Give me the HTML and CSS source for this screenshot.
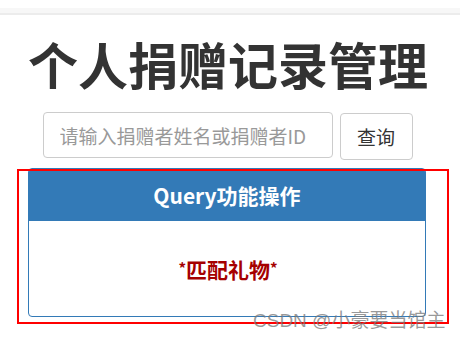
FILE: index.html
```html
<!DOCTYPE html>
<html lang="zh-CN">
<head>
    <meta charset="UTF-8">
    <meta name="viewport" content="width=device-width, initial-scale=1.0">
    <title>个人捐赠记录管理</title>
    <link rel="stylesheet" href="styles.css">
</head>
<body>
    <div class="topbar"></div>

    <div class="container">
        <h1>个人捐赠记录管理</h1>

        <form class="search">
            <input class="search-input" type="text" placeholder="请输入捐赠者姓名或捐赠者ID">
            <button class="search-btn" type="button">查询</button>
        </form>

        <div class="panel">
            <div class="panel-heading">Query功能操作</div>
            <div class="panel-body">
                <span class="gift"><span class="star">*</span>匹配礼物<span class="star">*</span></span>
            </div>
        </div>
    </div>

    <div class="highlight"></div>
    <div class="watermark">CSDN @小豪要当馆主</div>
</body>
</html>
```

FILE: styles.css
```css
body {
    margin: 0;
    font-family: "Liberation Sans", "Noto Sans CJK SC", sans-serif;
    color: #333;
    background: #fff;
    position: relative;
    height: 340px;
    overflow: hidden;
}
.topbar {
    margin-top: 8px;
    height: 5px;
    background-color: #f7f7f7;
    border-bottom: 2px solid #ececec;
}
.container {
    width: 398px;
    margin-left: 28px;
}
h1 {
    margin: 18px 0 0;
    font-family: "Noto Sans CJK SC", sans-serif;
    font-size: 50px;
    line-height: 60px;
    font-weight: bold;
    color: #333;
    text-align: center;
    white-space: nowrap;
}
.search {
    display: flex;
    justify-content: center;
    align-items: flex-start;
    gap: 7px;
    margin: 19px 0 0 1px;
}
.search-input {
    box-sizing: border-box;
    width: 290px;
    height: 46px;
    padding: 0 16px;
    border: 1px solid #ccc;
    border-radius: 4px;
    font-family: "Noto Sans CJK SC", sans-serif;
    font-size: 19px;
    color: #555;
}
.search-input::placeholder {
    color: #999;
}
.search-btn {
    box-sizing: border-box;
    width: 73px;
    height: 47px;
    margin-top: 1px;
    border: 1px solid #ccc;
    border-radius: 4px;
    background-color: #fff;
    font-family: "Noto Sans CJK SC", sans-serif;
    font-size: 19px;
    color: #333;
}
.panel {
    margin-top: 8px;
    border: 1px solid #337ab7;
    border-radius: 4px;
    overflow: hidden;
}
.panel-heading {
    height: 52px;
    background-color: #337ab7;
    color: #fff;
    font-family: "Noto Sans CJK SC", sans-serif;
    font-size: 21px;
    font-weight: bold;
    line-height: 52px;
    text-align: center;
}
.panel-body {
    height: 95px;
    display: flex;
    align-items: center;
    justify-content: center;
}
.gift {
    margin-left: 2px;
    font-family: "Noto Sans CJK SC", sans-serif;
    font-size: 21px;
    font-weight: bold;
    color: #a50000;
}
.star {
    font-size: 15px;
    vertical-align: 4px;
}
.highlight {
    position: absolute;
    left: 17px;
    top: 169px;
    width: 428px;
    height: 151px;
    border: 2px solid #ff0000;
}
.watermark {
    position: absolute;
    left: 253px;
    top: 310px;
    font-family: "Liberation Sans", "Noto Sans CJK SC", sans-serif;
    font-size: 19px;
    line-height: 22px;
    color: rgba(120, 120, 120, 0.75);
    white-space: nowrap;
}
```
